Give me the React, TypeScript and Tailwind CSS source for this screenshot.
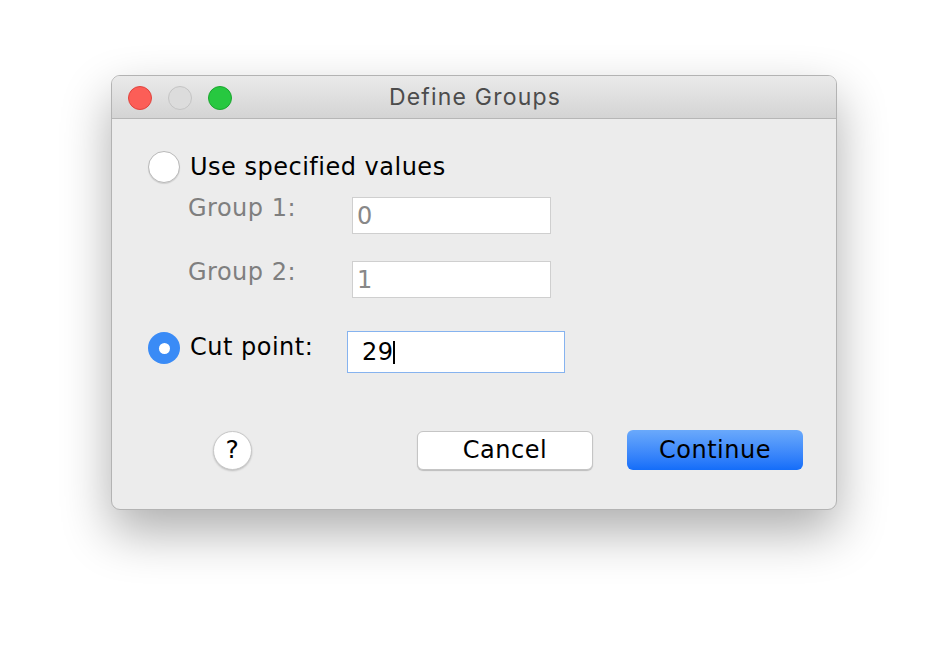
import { useState } from 'react';

const body = { fontFamily: '"DejaVu Sans", "Noto Sans", sans-serif', letterSpacing: '0.5px' };

function Radio({ checked, onClick }: { checked: boolean; onClick: () => void }) {
    return checked ? (
        <button
            onClick={onClick}
            className="w-[32px] h-[32px] rounded-full bg-[#3a8bf6] flex items-center justify-center shrink-0"
        >
            <span className="w-[11px] h-[11px] rounded-full bg-white" />
        </button>
    ) : (
        <button
            onClick={onClick}
            className="w-[32px] h-[32px] rounded-full bg-white border border-[#b9b9b9] shadow-[0_1px_1px_rgba(0,0,0,0.12)] shrink-0"
        />
    );
}

export default function App() {
    const [mode, setMode] = useState<'values' | 'cut'>('cut');
    const [cut, setCut] = useState('29');

    return (
        <div className="w-full min-h-[656px] bg-white pt-[75px]" style={body}>
            <div className="mx-auto w-[726px] rounded-[9px] border border-[#b3b3b3] bg-[#ececec] shadow-[0_22px_50px_rgba(0,0,0,0.32)] overflow-hidden">
                {/* title bar */}
                <div className="relative h-[43px] flex items-center justify-center bg-gradient-to-b from-[#eaeaea] to-[#d4d4d4] border-b border-[#b6b6b6]">
                    <div className="absolute left-[16px] top-[10px] flex gap-[16px]">
                        <span className="w-[24px] h-[24px] rounded-full bg-[#fc5e57] border border-[#e0443e]" />
                        <span className="w-[24px] h-[24px] rounded-full bg-[#dcdcdc] border border-[#c4c4c4]" />
                        <span className="w-[24px] h-[24px] rounded-full bg-[#27c840] border border-[#1ba62f]" />
                    </div>
                    <span
                        className="text-[23px] text-[#4c4c4c] tracking-[1.2px] pl-[2px]"
                        style={{ fontFamily: 'Inter, "Liberation Sans", sans-serif' }}
                    >
                        Define Groups
                    </span>
                </div>

                {/* content */}
                <div className="pl-[36px] pr-[33px] pt-[32px] pb-[39px]">
                    <div className="flex items-center gap-[10px] h-[32px]">
                        <Radio checked={mode === 'values'} onClick={() => setMode('values')} />
                        <span className="text-[24px] text-black leading-none">Use specified values</span>
                    </div>

                    <div className="mt-[14px] pl-[40px] flex flex-col gap-[27px]">
                        <div className="flex items-start">
                            <span className="w-[164px] text-[24px] text-[#7f7f7f] leading-none -mt-[1px]">Group 1:</span>
                            <div className="w-[199px] h-[37px] bg-white border border-[#cfcfcf] flex items-center pl-[4px] text-[24px] text-[#888]">0</div>
                        </div>
                        <div className="flex items-start">
                            <span className="w-[164px] text-[24px] text-[#7f7f7f] leading-none -mt-[1px]">Group 2:</span>
                            <div className="w-[199px] h-[37px] bg-white border border-[#cfcfcf] flex items-center pl-[4px] text-[24px] text-[#888]">1</div>
                        </div>
                    </div>

                    <div className="mt-[33px] flex items-start">
                        <div className="flex items-center gap-[10px] h-[32px] w-[199px] mt-[1px]">
                            <Radio checked={mode === 'cut'} onClick={() => setMode('cut')} />
                            <span className="text-[24px] text-black leading-none -mt-[2px]">Cut point:</span>
                        </div>
                        <div className="w-[218px] h-[42px] bg-white border border-[#86b3ef] flex items-center pl-[14px]">
                            <input
                                value={cut}
                                onChange={(e) => setCut(e.target.value)}
                                className="w-[31px] bg-transparent outline-none text-[24px] text-black"
                                style={body}
                            />
                            <span className="w-[1.5px] h-[23px] bg-black" />
                        </div>
                    </div>

                    <div className="mt-[57px] flex items-center">
                        <button className="ml-[65px] w-[39px] h-[39px] rounded-full bg-white border border-[#c8c8c8] shadow-[0_1px_2px_rgba(0,0,0,0.2)] text-[25px] text-black flex items-center justify-center">
                            ?
                        </button>
                        <button className="ml-auto w-[176px] h-[39px] rounded-[6px] bg-white border border-[#c5c5c5] shadow-[0_1px_1px_rgba(0,0,0,0.2)] text-[24px] text-black">
                            Cancel
                        </button>
                        <button className="ml-[34px] w-[176px] h-[40px] rounded-[6px] bg-gradient-to-b from-[#6aa9fb] to-[#136df9] text-[24px] text-black">
                            Continue
                        </button>
                    </div>
                </div>
            </div>
        </div>
    );
}
